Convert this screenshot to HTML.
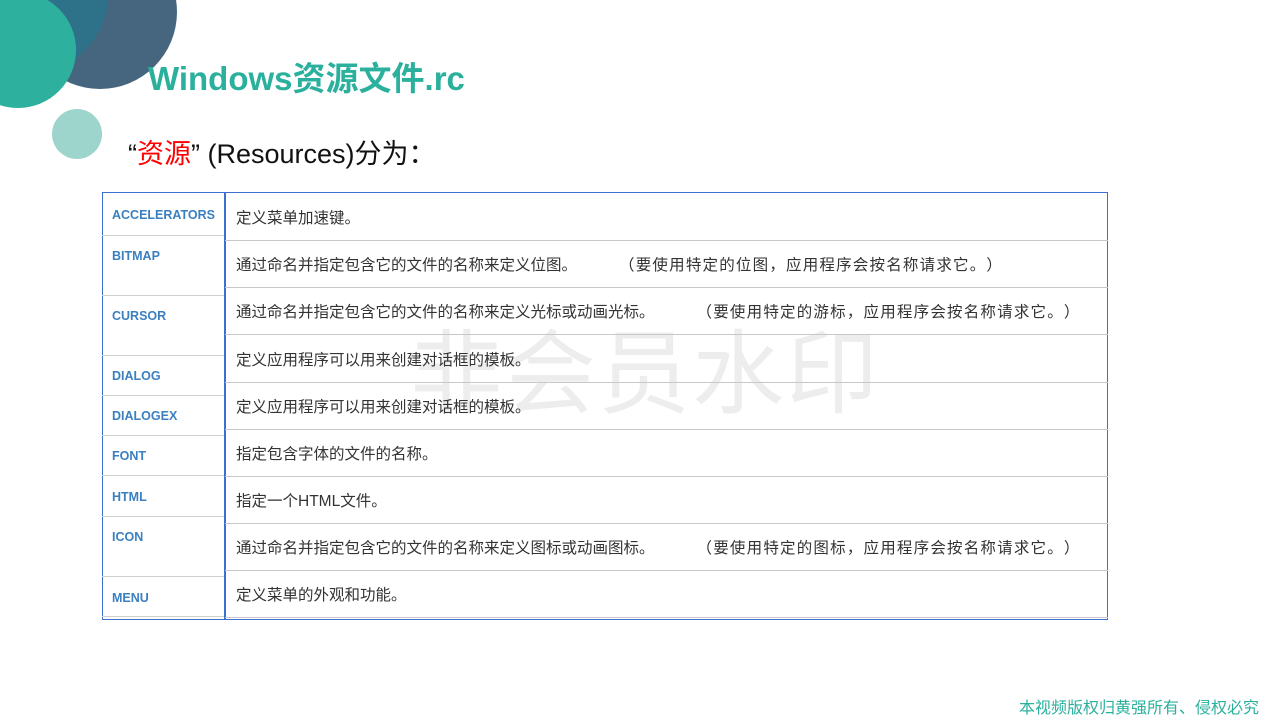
<!DOCTYPE html>
<html><head><meta charset="utf-8"><style>
body{margin:0;width:1280px;height:720px;background:#fff;position:relative;overflow:hidden;font-family:"Liberation Sans","Noto Sans CJK SC",sans-serif;text-spacing-trim:space-all}
.a{position:absolute}
.l{position:absolute;left:102px;width:122px;border-top:1px solid #d0d0d0;box-sizing:border-box;font-size:12.5px;font-weight:bold;color:#3a7fc0;padding-left:10px}
.r{position:absolute;left:225px;width:883px;border-top:1px solid #c8c8c8;box-sizing:border-box;font-size:15.5px;color:#333;padding-left:11px;display:flex;align-items:center;white-space:nowrap;text-spacing-trim:space-all}
.p{margin-left:42px;letter-spacing:1.2px}
</style></head><body>
<svg class="a" style="left:0;top:0" width="200" height="170">
<circle cx="100" cy="12" r="77" fill="#45667e"/>
<circle cx="30" cy="-5" r="78" fill="#2d7289"/>
<circle cx="18" cy="50" r="58" fill="#2eb09e"/>
<circle cx="77" cy="134" r="25" fill="#9dd4cb"/>
</svg>
<div class="a" style="left:148px;top:52px;font-size:33px;font-weight:bold;color:#2bb09d">Windows资源文件.rc</div>
<div class="a" style="left:128px;top:132px;font-size:27px;color:#111;white-space:nowrap">“<span style="color:#f00">资源</span>” (Resources)分为：</div>
<div class="a" style="left:410px;top:300px;font-size:92px;color:rgba(0,0,0,0.07);letter-spacing:2px">非会员水印</div>
<div class="a" style="left:102px;top:192px;width:1006px;height:428px;border:1px solid #3d6fd0;box-sizing:border-box"></div>
<div class="a" style="left:224px;top:192px;width:2px;height:428px;background:#3d6fd0"></div>
<div class="l" style="top:193px;border:none;height:42px;padding-top:15px">ACCELERATORS</div>
<div class="l" style="top:235px;padding-top:13px">BITMAP</div>
<div class="l" style="top:295px;padding-top:13px">CURSOR</div>
<div class="l" style="top:355px;padding-top:13px">DIALOG</div>
<div class="l" style="top:395px;padding-top:13px">DIALOGEX</div>
<div class="l" style="top:435px;padding-top:13px">FONT</div>
<div class="l" style="top:475px;padding-top:14px">HTML</div>
<div class="l" style="top:516px;padding-top:13px">ICON</div>
<div class="l" style="top:576px;padding-top:14px">MENU</div>
<div class="l" style="top:616px;height:3px"></div>
<div class="r" style="top:193px;border:none;height:47px">定义菜单加速键。</div>
<div class="r" style="top:240px;height:47px">通过命名并指定包含它的文件的名称来定义位图。<span class="p">（要使用特定的位图，应用程序会按名称请求它。）</span></div>
<div class="r" style="top:287px;height:47px">通过命名并指定包含它的文件的名称来定义光标或动画光标。<span class="p">（要使用特定的游标，应用程序会按名称请求它。）</span></div>
<div class="r" style="top:334px;height:48px">定义应用程序可以用来创建对话框的模板。</div>
<div class="r" style="top:382px;height:47px">定义应用程序可以用来创建对话框的模板。</div>
<div class="r" style="top:429px;height:47px">指定包含字体的文件的名称。</div>
<div class="r" style="top:476px;height:47px">指定一个HTML文件。</div>
<div class="r" style="top:523px;height:47px">通过命名并指定包含它的文件的名称来定义图标或动画图标。<span class="p">（要使用特定的图标，应用程序会按名称请求它。）</span></div>
<div class="r" style="top:570px;height:47px">定义菜单的外观和功能。</div>
<div class="r" style="top:617px;height:2px"></div>
<div class="a" style="left:1019px;top:694px;font-size:16px;color:#2bb09d;white-space:nowrap">本视频版权归黄强所有、侵权必究</div>
</body></html>
